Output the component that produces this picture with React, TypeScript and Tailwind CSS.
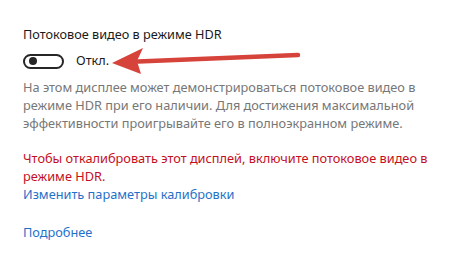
import React from 'react';

const Arrow: React.FC = () => (
  <svg className="absolute left-0 top-0 pointer-events-none" width="474" height="256" viewBox="0 0 474 256">
    <line x1="138" y1="61.5" x2="298" y2="55" stroke="#d6433b" strokeWidth="4.5" strokeLinecap="round" />
    <polygon points="112,63 143,48 137,61 141,74" fill="#d6433b" />
  </svg>
);

const App: React.FC = () => {
  return (
    <div className="relative w-[474px] h-[256px] bg-white overflow-hidden font-['Noto_Sans',sans-serif]">
      <div className="flex flex-col pl-[23px] pt-[24px]">
        <h2 className="text-[12.7px] leading-[20px] text-[#1a1a1a]">Потоковое видео в режиме HDR</h2>
        <div className="flex items-center gap-[12px] mt-[8px] h-[18px]">
          <div className="w-[41px] h-[15px] rounded-full border-2 border-[#262626] flex items-center pl-[4px]">
            <div className="w-[8px] h-[8px] rounded-full bg-[#262626]" />
          </div>
          <span className="text-[12.7px] text-[#1a1a1a]">Откл.</span>
        </div>
        <p className="mt-[8px] text-[12.75px] leading-[18px] text-[#777777] w-[415px]">
          На этом дисплее может демонстрироваться потоковое видео в режиме HDR при его наличии. Для достижения максимальной эффективности проигрывайте его в полноэкранном режиме.
        </p>
        <p className="mt-[17px] text-[12.75px] leading-[18px] text-[#c50f1f] w-[415px]">
          Чтобы откалибровать этот дисплей, включите потоковое видео в режиме HDR.
        </p>
        <a className="mt-0 text-[12.75px] leading-[18px] text-[#1f72c9]">Изменить параметры калибровки</a>
        <a className="mt-[20px] text-[12.75px] leading-[18px] text-[#1f72c9]">Подробнее</a>
      </div>
      <Arrow />
    </div>
  );
};

export default App;
